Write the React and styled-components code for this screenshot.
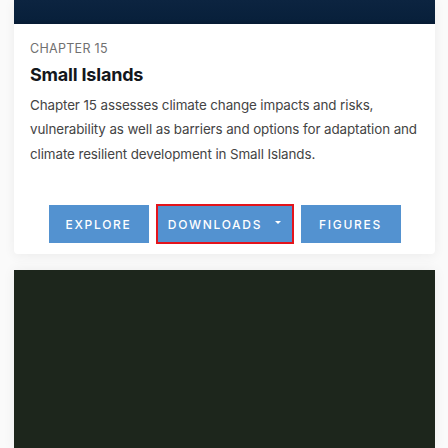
import styled, { createGlobalStyle } from "styled-components";

const GlobalStyle = createGlobalStyle`
  html, body {
    margin: 0;
    padding: 0;
    background: #fafafa;
    font-family: "Inter", "Liberation Sans", sans-serif;
  }
`;

const Page = styled.div`
  display: flex;
  flex-direction: column;
  gap: 16px;
  padding: 0 13px 0 14px;
  height: 448px;
  overflow: hidden;
`;

const Card = styled.div`
  background: #fff;
  border-radius: 0 0 4px 4px;
  box-shadow: 0 2px 12px rgba(0, 0, 0, 0.06);
  display: flex;
  flex-direction: column;
`;

const Banner = styled.div`
  height: 24px;
  background: linear-gradient(180deg, #0c2440 0%, #08203b 80%, #061a33 100%);
`;

const Body = styled.div`
  padding: 18px 14px 10px 16px;
  display: flex;
  flex-direction: column;
`;

const Label = styled.div`
  font-size: 12.5px;
  color: #707070;
  letter-spacing: 0.3px;
  text-transform: uppercase;
  line-height: 14px;
`;

const Title = styled.h2`
  margin: 6.5px 0 0 0;
  font-size: 18px;
  font-weight: 700;
  color: #14171c;
  line-height: 24px;
  letter-spacing: -0.2px;
`;

const Text = styled.p`
  margin: 6px 0 0 0;
  font-size: 13.4px;
  line-height: 24.5px;
  color: #444;
  letter-spacing: -0.1px;
  white-space: nowrap;
`;

const Actions = styled.div`
  display: flex;
  justify-content: center;
  align-items: center;
  gap: 7px;
  margin-top: 38px;
  padding-right: 2px;
`;

const Button = styled.button`
  display: flex;
  align-items: center;
  justify-content: center;
  gap: 13px;
  width: ${(p) => (p.$wide ? "138px" : "100px")};
  height: ${(p) => (p.$focus ? "40px" : "38px")};
  background: #5392d0;
  color: #fff;
  border: ${(p) => (p.$focus ? "2px solid #e3141b" : "none")};
  padding: 0;
  font-family: "Inter", "Liberation Sans", sans-serif;
  font-size: 12px;
  font-weight: 500;
  letter-spacing: 1.7px;
  text-transform: uppercase;
`;

const Caret = styled.span`
  width: 0;
  height: 0;
  border-left: 3.5px solid transparent;
  border-right: 3.5px solid transparent;
  border-top: 3.5px solid #fff;
  margin-top: -3px;
`;

const Media = styled.div`
  background: #1d261c;
  flex: 1;
  box-shadow: 0 0 12px rgba(0, 0, 0, 0.06);
`;

export default function App() {
  return (
    <>
      <GlobalStyle />
      <Page>
        <Card>
          <Banner />
          <Body>
            <Label>Chapter 15</Label>
            <Title>Small Islands</Title>
            <Text>
              Chapter 15 assesses climate change impacts and risks,
              <br />
              vulnerability as well as barriers and options for adaptation and
              <br />
              climate resilient development in Small Islands.
            </Text>
            <Actions>
              <Button>Explore</Button>
              <Button $wide $focus>
                Downloads <Caret />
              </Button>
              <Button>Figures</Button>
            </Actions>
          </Body>
        </Card>
        <Media />
      </Page>
    </>
  );
}
